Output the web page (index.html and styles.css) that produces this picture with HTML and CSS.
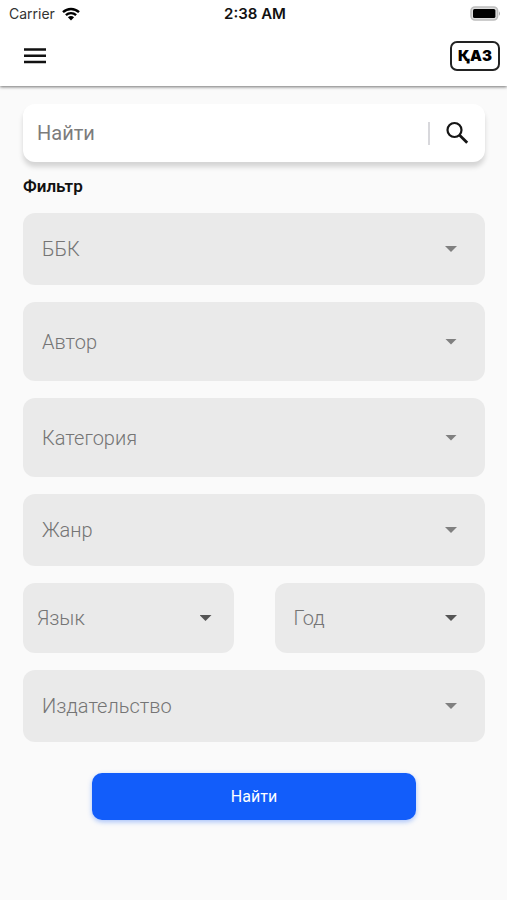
FILE: index.html
```html
<!DOCTYPE html>
<html lang="ru">
<head>
<meta charset="utf-8">
<meta name="viewport" content="width=device-width, initial-scale=1">
<title>Фильтр</title>
<link rel="stylesheet" href="styles.css">
</head>
<body>
<header class="top">
  <div class="status">
    <span class="carrier">Carrier
      <svg class="wifi" viewBox="0 0 18 14" aria-hidden="true"><path d="M1 5.2a11.6 11.6 0 0 1 16 0M3.9 8.2a7.4 7.4 0 0 1 10.2 0" fill="none" stroke="#000" stroke-width="2.4"/><path d="M5.9 10.3a4.6 4.6 0 0 1 6.2 0L9 13.6z"/></svg>
    </span>
    <span class="time">2:38 AM</span>
    <svg class="battery" viewBox="0 0 31 15" aria-hidden="true"><rect x="1" y="1" width="26.6" height="13" rx="4" fill="#ddd" stroke="#bdbdbd" stroke-width="1.6"/><rect x="3" y="3" width="22.4" height="9" rx="1.5"/><path d="M29 5.2q2 2.3 0 4.6z" fill="#aaa"/></svg>
  </div>
  <nav class="bar">
    <button class="menu" type="button" aria-label="Меню"><svg viewBox="0 0 24 18" aria-hidden="true"><path d="M1 2.5h22M1 8.7h22M1 14.9h22" stroke="#111" stroke-width="2.5"/></svg></button>
    <button class="lang" type="button">ҚАЗ</button>
  </nav>
</header>
<main>
  <form class="form">
    <div class="search">
      <input type="text" placeholder="Найти" aria-label="Найти">
      <span class="divider"></span>
      <button class="search-btn" type="button" aria-label="Искать"><svg viewBox="0 0 24 24" aria-hidden="true"><circle cx="9.5" cy="9" r="7" fill="none" stroke="#151515" stroke-width="2.2"/><path d="M14.4 14l7.8 7.8" stroke="#151515" stroke-width="2.8"/></svg></button>
    </div>
    <h1>Фильтр</h1>
    <div class="fields">
      <div class="field"><select aria-label="ББК"><option>ББК</option></select><span class="arrow"></span></div>
      <div class="field tall"><select aria-label="Автор"><option>Автор</option></select><span class="arrow"></span></div>
      <div class="field tall"><select aria-label="Категория"><option>Категория</option></select><span class="arrow"></span></div>
      <div class="field"><select aria-label="Жанр"><option>Жанр</option></select><span class="arrow"></span></div>
      <div class="pair">
        <div class="field short narrow"><select aria-label="Язык"><option>Язык</option></select><span class="arrow"></span></div>
        <div class="field short"><select aria-label="Год"><option>Год</option></select><span class="arrow"></span></div>
      </div>
      <div class="field"><select aria-label="Издательство"><option>Издательство</option></select><span class="arrow"></span></div>
    </div>
    <button class="submit" type="button">Найти</button>
  </form>
</main>
</body>
</html>
```
FILE: styles.css
```css
* { box-sizing: border-box; }
body {
  margin: 0;
  min-height: 100vh;
  background: #fafafa;
  color: #111;
  font-family: Roboto, "Noto Sans", sans-serif;
}
button, input, select { font: inherit; color: inherit; border: 0; margin: 0; padding: 0; background: none; }
svg { display: block; }

.top { background: #fff; box-shadow: 0 1px 3px rgba(0, 0, 0, .55); }
.status {
  display: grid;
  grid-template-columns: 1fr auto 1fr;
  align-items: center;
  height: 27px;
  padding: 0 6px 0 9px;
  font-family: Inter, sans-serif;
  font-size: 14px;
}
.carrier { display: flex; align-items: center; gap: 7px; color: #333; }
.wifi { width: 18px; height: 14px; }
.time { font-weight: 600; font-size: 15px; }
.battery { width: 31px; height: 15px; justify-self: end; }
.bar {
  display: flex;
  align-items: center;
  justify-content: space-between;
  height: 59px;
  padding: 0 7px 2px 23px;
}
.menu svg { width: 24px; height: 18px; }
.lang {
  width: 50px;
  height: 30px;
  border: 2px solid #222;
  border-radius: 7px;
  color: #000;
  font-family: Inter, sans-serif;
  font-size: 15px;
  font-weight: 900;
}

.form { display: flex; flex-direction: column; padding: 18px 22px 18px 23px; }
.search {
  display: flex;
  align-items: center;
  height: 58px;
  padding: 0 16px 0 14px;
  border-radius: 12px;
  background: #fff;
  box-shadow: 0 5px 5px rgba(0, 0, 0, .15);
}
.search input { flex: 1; min-width: 0; outline: 0; font-size: 20px; }
.search input::placeholder { color: #7c7c7c; opacity: 1; }
.divider { width: 2px; height: 23px; margin-right: 15px; background: #d8d8dc; }
.search-btn svg { width: 24px; height: 24px; }
h1 { margin: 14px 0 17px; font-size: 17px; line-height: 20px; font-weight: 600; }

.fields { display: flex; flex-direction: column; gap: 17px; }
.pair { display: grid; grid-template-columns: 1fr 1fr; gap: 41px; }
.field { display: grid; align-items: center; height: 72px; }
.field select, .arrow { grid-area: 1 / 1; }
.field select {
  width: 100%;
  height: 100%;
  padding: 0 19px;
  appearance: none;
  border-radius: 12px;
  background: #eaeaea;
  color: #757575;
  font-size: 20px;
  font-weight: 300;
}
.tall { height: 79px; }
.short { height: 70px; }
.narrow select { padding-left: 14px; }
.arrow {
  justify-self: end;
  width: 12px;
  height: 6px;
  margin-right: 28px;
  background: #808080;
  clip-path: polygon(0 0, 100% 0, 50% 100%);
  pointer-events: none;
}
.short .arrow { background: #555; }
.narrow .arrow { margin-right: 22px; }

.submit {
  align-self: center;
  width: 70%;
  height: 47px;
  margin-top: 31px;
  border-radius: 10px;
  background: #125dfa;
  box-shadow: 0 2px 5px rgba(18, 93, 250, .35);
  color: #fff;
  font-size: 16px;
}
```
